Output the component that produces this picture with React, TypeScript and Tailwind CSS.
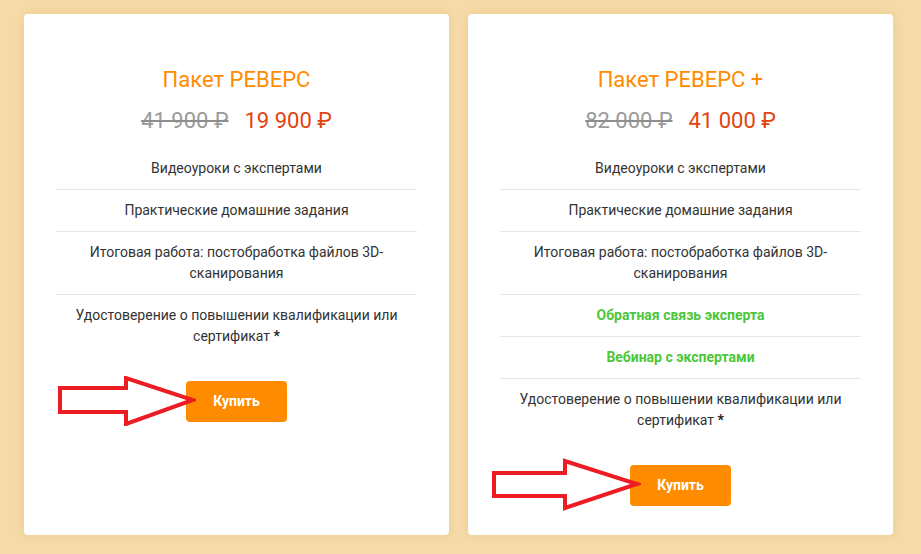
const packages = [
  {
    title: "Пакет РЕВЕРС",
    oldPrice: "41 900 ₽",
    newPrice: "19 900 ₽",
    items: [
      { text: "Видеоуроки с экспертами" },
      { text: "Практические домашние задания" },
      { text: "Итоговая работа: постобработка файлов 3D-сканирования" },
    ],
    arrow: { left: -129, top: -5, w: 139, h: 50, points: "3,12 69,12 69,2 136,24 69,48 69,36 3,36" },
  },
  {
    title: "Пакет РЕВЕРС +",
    oldPrice: "82 000 ₽",
    newPrice: "41 000 ₽",
    items: [
      { text: "Видеоуроки с экспертами" },
      { text: "Практические домашние задания" },
      { text: "Итоговая работа: постобработка файлов 3D-сканирования" },
      { text: "Обратная связь эксперта", accent: true },
      { text: "Вебинар с экспертами", accent: true },
    ],
    arrow: { left: -139, top: -7, w: 150, h: 53, points: "3,15 74,15 74,3 146,26 74,50 74,38 3,38" },
  },
];

export default function App() {
  return (
    <div
      className="min-h-[554px] bg-[#f6dba8] pt-[14px] pl-[24px] flex gap-[19px] items-start"
      style={{ fontFamily: "Roboto, 'Liberation Sans', sans-serif" }}
    >
      {packages.map((p) => (
        <div
          key={p.title}
          className="w-[425px] h-[521px] bg-white rounded-[4px] shadow-[0_0_12px_rgba(160,110,30,0.15)] flex flex-col items-center pt-[52px] px-8"
        >
          <h3 className="text-[22px] leading-[28px] text-[#ff8c00]">{p.title}</h3>
          <div className="mt-[13px] flex items-center gap-[16px] text-[22px] leading-[28px]">
            <span className="text-[#9a9a9a] line-through decoration-[2px] decoration-[#8e8e8e]">{p.oldPrice}</span>
            <span className="text-[#e2430e]">{p.newPrice}</span>
          </div>
          <ul className="mt-[13px] w-full text-center text-[14px] leading-[21px] text-[#333]">
            {p.items.map((it) => (
              <li
                key={it.text}
                className={`py-[10px] px-4 border-b border-[#e3e6ee] ${it.accent ? "font-bold text-[#4cc63a]" : ""}`}
              >
                {it.text}
              </li>
            ))}
            <li className="py-[10px] px-4">
              Удостоверение о повышении квалификации или сертификат <b className="text-[#222]">*</b>
            </li>
          </ul>
          <div className="relative mt-[24px]">
            <button className="w-[101px] h-[41px] rounded-[4px] bg-[#ff8c00] text-white text-[14px] font-bold">
              Купить
            </button>
            <svg
              className="absolute pointer-events-none"
              style={{ left: p.arrow.left, top: p.arrow.top }}
              width={p.arrow.w}
              height={p.arrow.h}
              viewBox={`0 0 ${p.arrow.w} ${p.arrow.h}`}
            >
              <polygon points={p.arrow.points} fill="none" stroke="#ec1c24" strokeWidth="4" strokeLinejoin="miter" />
            </svg>
          </div>
        </div>
      ))}
    </div>
  );
}
